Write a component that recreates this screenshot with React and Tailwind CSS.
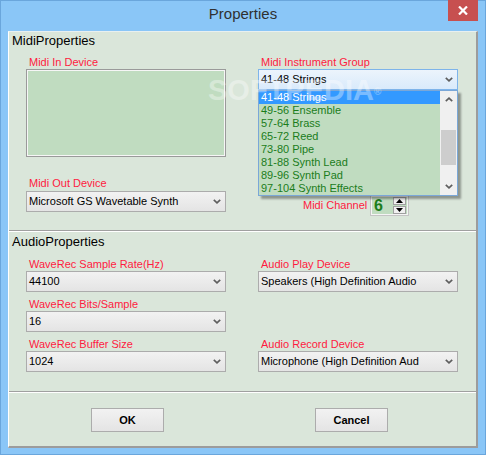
import React from "react";

const Chevron = ({ up = false }) => (
  <svg width="8" height="5" viewBox="0 0 8 5" className="block">
    <path
      d={up ? "M0.8 4.2L4 1.2L7.2 4.2" : "M0.8 0.8L4 3.8L7.2 0.8"}
      stroke="#5e5e5e"
      strokeWidth="1.7"
      fill="none"
    />
  </svg>
);

const Label = ({ children }) => (
  <div className="h-[13px] pl-[3px] text-[11px] leading-[13px] text-[#ff1a40] whitespace-nowrap">
    {children}
  </div>
);

const Select = ({ value }) => (
  <div className="relative flex h-[21px] w-[200px] items-center border border-[#acacac] bg-gradient-to-b from-[#f2f2f2] to-[#e4e4e4] pl-[2px] text-[11px] text-black">
    <span className="whitespace-nowrap">{value}</span>
    <span className="ml-auto mr-[4px]">
      <Chevron />
    </span>
  </div>
);

const instruments = [
  "41-48 Strings",
  "49-56 Ensemble",
  "57-64 Brass",
  "65-72 Reed",
  "73-80 Pipe",
  "81-88 Synth Lead",
  "89-96 Synth Pad",
  "97-104 Synth Effects",
];

const InstrumentDropdown = () => (
  <div className="absolute left-0 top-[21px] z-10 flex h-[106px] w-[200px] border border-[#7aa7d8] bg-[#c0dcc0] shadow-[3px_3px_2px_rgba(0,0,0,0.35)]">
    <div className="flex-1">
      {instruments.map((item, i) => (
        <div
          key={item}
          className={
            i === 0
              ? "h-[13px] bg-[#3399ff] pl-[2px] text-[11px] leading-[13px] text-white"
              : "h-[13px] pl-[2px] text-[11px] leading-[13px] text-[#1b7d1b]"
          }
        >
          {item}
        </div>
      ))}
    </div>
    <div className="flex w-[17px] flex-col bg-[#f0f0f0]">
      <div className="flex h-[17px] items-center justify-center">
        <Chevron up />
      </div>
      <div className="flex-1 px-[1px] pt-[22px]">
        <div className="h-[35px] bg-[#cdcdcd]" />
      </div>
      <div className="flex h-[17px] items-center justify-center">
        <Chevron />
      </div>
    </div>
  </div>
);

const Spinner = () => (
  <div className="flex h-[21px] w-[39px] items-center border border-[#c4c4c4] bg-[#c0dcc0] shadow-[inset_0_0_0_1px_#f4f4f4]">
    <span className="ml-[3px] text-[16px] font-bold leading-[16px] text-[#1b7d1b]">6</span>
    <div className="ml-auto mr-[2px] flex flex-col gap-[1px]">
      <div className="flex h-[8px] w-[13px] items-center justify-center border border-[#a0a0a0] bg-[#f0f0f0]">
        <svg width="7" height="4" viewBox="0 0 7 4">
          <polygon points="0,4 3.5,0 7,4" fill="#000" />
        </svg>
      </div>
      <div className="flex h-[8px] w-[13px] items-center justify-center border border-[#a0a0a0] bg-[#f0f0f0]">
        <svg width="7" height="4" viewBox="0 0 7 4">
          <polygon points="0,0 3.5,4 7,0" fill="#000" />
        </svg>
      </div>
    </div>
  </div>
);

const Button = ({ children }) => (
  <button className="flex h-[24px] w-[73px] items-center justify-center border border-[#acacac] bg-gradient-to-b from-[#f2f2f2] to-[#e4e4e4] text-[11px] font-bold text-black">
    {children}
  </button>
);

const Separator = () => (
  <div className="h-[2px] border-t border-[#a0a0a0] bg-white" />
);

export default function App() {
  return (
    <div className="flex h-[455px] w-[486px] flex-col border border-[#6aa6dc] bg-[#8ac6f7] font-['Liberation_Sans',Arial,sans-serif]">
      {/* title bar */}
      <div className="relative h-[30px] pt-[4px] text-center text-[15px] leading-[18px] text-[#303030]">
        Properties
        <div className="absolute right-[7px] top-[-1px] flex h-[21px] w-[30px] items-center justify-center bg-[#c75050]">
          <svg width="10" height="9" viewBox="0 0 10 9">
            <path d="M1 0.5L9 8.5M9 0.5L1 8.5" stroke="#fff" strokeWidth="2.2" />
          </svg>
        </div>
      </div>

      {/* client area */}
      <div className="relative mx-[7px] flex h-[417px] flex-col border-b-2 border-l border-r-2 border-t border-b-[#9c9c9c] border-l-white border-r-[#9c9c9c] border-t-[#e8f0f0] bg-[#dae6da]">
        {/* midi */}
        <div className="h-[198px]">
          <div className="h-[24px] pl-[3px] pt-[1px] text-[13px] leading-[16px] text-black">
            MidiProperties
          </div>
          <div className="flex gap-[32px] pl-[17px]">
            <div className="w-[200px]">
              <Label>Midi In Device</Label>
              <div className="h-[88px] border border-[#9a9a9a] bg-[#c0dcc0] shadow-[inset_0_0_0_1px_#f6f6f6]" />
              <div className="mt-[20px]">
                <Label>Midi Out Device</Label>
              </div>
              <div className="mt-[1px]">
                <Select value="Microsoft GS Wavetable Synth" />
              </div>
            </div>
            <div className="w-[200px]">
              <Label>Midi Instrument Group</Label>
              <div className="relative">
                <div className="flex h-[21px] w-[200px] items-center border border-[#7eb4ea] bg-gradient-to-b from-[#ecf4fc] to-[#d9eafb] pl-[2px] text-[11px] text-black">
                  <span>41-48 Strings</span>
                  <span className="ml-auto mr-[4px]">
                    <Chevron />
                  </span>
                </div>
                <InstrumentDropdown />
              </div>
              <div className="mt-[105px] flex items-center pl-[45px]">
                <span className="w-[67px] text-[11px] leading-[13px] text-[#ff1a40]">Midi Channel</span>
                <Spinner />
              </div>
            </div>
          </div>
        </div>

        <Separator />

        {/* audio */}
        <div className="h-[159px]">
          <div className="h-[26px] pl-[3px] pt-[2px] text-[13px] leading-[16px] text-black">
            AudioProperties
          </div>
          <div className="flex gap-[32px] pl-[17px]">
            <div className="w-[200px]">
              <Label>WaveRec Sample Rate(Hz)</Label>
              <Select value="44100" />
              <div className="mt-[6px]">
                <Label>WaveRec Bits/Sample</Label>
              </div>
              <Select value="16" />
              <div className="mt-[6px]">
                <Label>WaveRec Buffer Size</Label>
              </div>
              <Select value="1024" />
            </div>
            <div className="w-[200px]">
              <Label>Audio Play Device</Label>
              <Select value="Speakers (High Definition Audio" />
              <div className="mt-[46px]">
                <Label>Audio Record Device</Label>
              </div>
              <Select value="Microphone (High Definition Aud" />
            </div>
          </div>
        </div>

        <Separator />

        {/* buttons */}
        <div className="flex flex-1 gap-[151px] pl-[82px] pt-[15px]">
          <Button>OK</Button>
          <Button>Cancel</Button>
        </div>

        {/* watermark */}
        <div className="pointer-events-none absolute left-[199px] top-[42px] z-20 text-[29px] font-bold leading-[32px] text-white opacity-35">
          SOFTPEDIA<sup className="text-[10px]">®</sup>
        </div>
      </div>
    </div>
  );
}
